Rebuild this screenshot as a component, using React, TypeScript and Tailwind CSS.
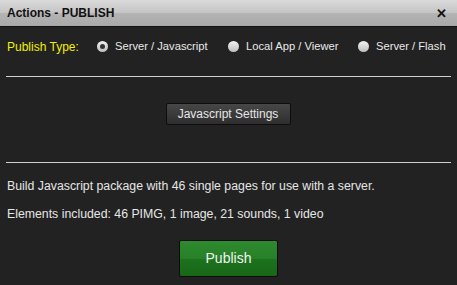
import React from "react";

function Radio({ checked, label, w }: { checked?: boolean; label: string; w: string }) {
  return (
    <div className={`flex items-center gap-[7px] whitespace-nowrap ${w}`}>
      <span className="w-[11px] h-[11px] rounded-full bg-[linear-gradient(#f2f2f2,#bdbdbd)] flex items-center justify-center shrink-0">
        {checked && <span className="w-[5px] h-[5px] rounded-full bg-[#333]" />}
      </span>
      <span className="text-[11.2px] text-[#e8e8e8]">{label}</span>
    </div>
  );
}

export default function App() {
  return (
    <div className="w-[457px] h-[285px] bg-[#222222] flex flex-col" style={{ fontFamily: '"Liberation Sans", Arial, sans-serif' }}>
      <div className="h-[27px] bg-[linear-gradient(#dadada,#c4c4c4_50%,#b4b4b4_52%,#a9a9a9)] flex items-center justify-between pl-[7px] pr-[10px] border-b border-[#111]">
        <span className="text-[12px] font-bold text-[#111]">Actions - PUBLISH</span>
        <span className="text-[13px] font-bold text-[#111] leading-none">✕</span>
      </div>
      <div className="flex items-center pl-[7px] mt-[12px] h-[15px] whitespace-nowrap">
        <span className="text-[12px] text-[#f0f000] w-[90px] shrink-0">Publish Type:</span>
        <Radio checked label="Server / Javascript" w="w-[131px]" />
        <Radio label="Local App / Viewer" w="w-[130px]" />
        <Radio label="Server / Flash" w="w-[90px]" />
      </div>
      <div className="mx-[6px] mt-[22px] h-px bg-[#d0d0d0]" />
      <div className="flex justify-center mt-[26px]">
        <button className="w-[125px] h-[22px] ml-[-1px] rounded-[2px] border border-[#0d0d0d] bg-[linear-gradient(#474747,#2e2e2e)] text-[12px] text-[#e6e6e6] whitespace-nowrap">
          Javascript Settings
        </button>
      </div>
      <div className="mx-[6px] mt-[37px] h-px bg-[#d0d0d0]" />
      <div className="pl-[7px] mt-[16px] text-[12.3px] text-[#e6e6e6] leading-[14px] whitespace-nowrap">Build Javascript package with 46 single pages for use with a server.</div>
      <div className="pl-[7px] mt-[14px] text-[12.3px] text-[#e6e6e6] leading-[14px] whitespace-nowrap">Elements included: 46 PIMG, 1 image, 21 sounds, 1 video</div>
      <div className="flex justify-center mt-[19px]">
        <button className="w-[99px] h-[37px] rounded-[2px] border border-[#0d0d0d] bg-[linear-gradient(#2f8a2f,#278027_50%,#1d721d_52%,#176717)] text-[14px] text-[#f2f2f2]">
          Publish
        </button>
      </div>
    </div>
  );
}
